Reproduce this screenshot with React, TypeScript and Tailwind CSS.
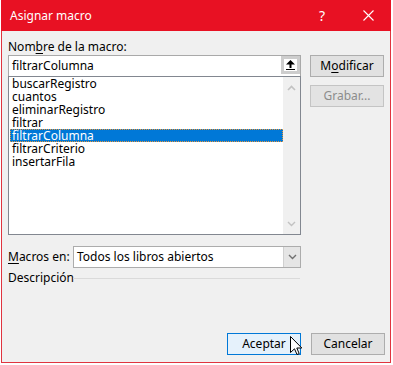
import React from "react";

const items = [
  "buscarRegistro",
  "cuantos",
  "eliminarRegistro",
  "filtrar",
  "filtrarColumna",
  "filtrarCriterio",
  "insertarFila",
];

const ChevronUp = () => (
  <svg width="9" height="6" viewBox="0 0 9 6">
    <path d="M1 5 L4.5 1.5 L8 5" fill="none" stroke="#c2c2c2" strokeWidth="1.6" />
  </svg>
);

const ChevronDown = ({ color = "#c2c2c2" }: { color?: string }) => (
  <svg width="9" height="6" viewBox="0 0 9 6">
    <path d="M1 1 L4.5 4.5 L8 1" fill="none" stroke={color} strokeWidth="1.4" />
  </svg>
);

const Cursor = () => (
  <svg width="13" height="20" viewBox="0 0 13 20" className="absolute left-[290px] top-[336px]">
    <path
      d="M0.5 0.5 L0.5 16.5 L4.5 12.8 L7 18.5 L9.2 17.6 L6.8 12 L11.8 12 Z"
      fill="#fff"
      stroke="#000"
      strokeWidth="1"
      strokeLinejoin="round"
    />
  </svg>
);

export default function App() {
  return (
    <div className="relative w-[393px] h-[365px] bg-white overflow-hidden font-['Segoe_UI','Noto_Sans',sans-serif] text-[12px] text-black">
      <div className="ml-[1px] w-[390px] h-[363px] flex flex-col">
        {/* title bar */}
        <div className="h-[31px] bg-[#e81123] text-white flex items-center">
          <span className="pl-[9px] flex-1 text-[12px]">Asignar macro</span>
          <div className="w-[46px] h-full flex items-center justify-center text-[14px]">?</div>
          <div className="w-[46px] h-full flex items-center justify-center">
            <svg width="11" height="11" viewBox="0 0 11 11">
              <path d="M0.5 0.5 L10.5 10.5 M10.5 0.5 L0.5 10.5" stroke="#fff" strokeWidth="1.1" />
            </svg>
          </div>
        </div>

        {/* body */}
        <div className="flex-1 flex flex-col bg-[#f0f0f0] border-x border-b border-[#e0343f] pl-[6px] pr-[5px] pt-[8px] pb-[7px]">
          <div className="h-[16px] leading-[16px]">
            Nom<span className="underline underline-offset-2">b</span>re de la macro:
          </div>

          <div className="flex gap-[9px]">
            <div className="w-[293px] flex flex-col">
              <div className="h-[21px] border border-[#a9a9a9] border-b-0 bg-white flex items-start">
                <span className="flex-1 pl-[3px] leading-[19px]">filtrarColumna</span>
                <div className="w-[19px] h-[18px] border-[3px] border-[#cdcdcd] bg-white flex items-center justify-center">
                  <svg width="9" height="10" viewBox="0 0 9 10">
                    <path d="M4.5 0 L9 4.5 L5.5 4.5 L5.5 8 L3.5 8 L3.5 4.5 L0 4.5 Z" fill="#000" />
                    <rect x="0" y="9" width="9" height="1" fill="#000" />
                  </svg>
                </div>
              </div>
              <div className="h-[159px] border border-[#828790] bg-white flex">
                <div className="flex-1 flex flex-col pl-[1px]">
                  {items.map((it) => (
                    <div
                      key={it}
                      className={
                        it === "filtrarColumna"
                          ? "h-[13px] leading-[13px] pl-[2px] bg-[#0078d7] text-white outline-1 outline-dotted outline-[#e8963a] -outline-offset-1"
                          : "h-[13px] leading-[13px] pl-[2px]"
                      }
                    >
                      {it}
                    </div>
                  ))}
                </div>
                <div className="w-[17px] bg-[#f0f0f0] flex flex-col items-center justify-between pt-[8px] pb-[7px]">
                  <ChevronUp />
                  <ChevronDown />
                </div>
              </div>
            </div>

            <div className="w-[74px] flex flex-col gap-[8px]">
              <div className="h-[22px] bg-[#e1e1e1] border border-[#adadad] flex items-center justify-center">
                M<span className="underline underline-offset-2">o</span>dificar
              </div>
              <div className="h-[22px] bg-[#e3e3e3] border border-[#c4c4c4] text-[#8c8c8c] flex items-center justify-center">
                Grabar...
              </div>
            </div>
          </div>

          <div className="mt-[11px] flex items-center">
            <div className="w-[65px]">
              <span className="underline underline-offset-2">M</span>acros en:
            </div>
            <div className="w-[228px] h-[22px] border border-[#acacac] bg-white flex">
              <span className="flex-1 pl-[3px] leading-[20px]">Todos los libros abiertos</span>
              <div className="w-[17px] bg-[#e5e5e5] border-l border-[#d0d0d0] flex items-center justify-center">
                <ChevronDown color="#707070" />
              </div>
            </div>
          </div>

          <div className="mt-[2px] h-[16px] flex items-center">
            <div className="w-[65px]">Descripción</div>
            <div className="w-[227px] h-px bg-[#dadada]" />
          </div>

          <div className="mt-auto flex justify-end gap-[10px]">
            <div className="w-[74px] h-[22px] bg-[#e5f1fb] border border-[#0078d7] flex items-center justify-center">
              Aceptar
            </div>
            <div className="w-[74px] h-[22px] bg-[#e1e1e1] border border-[#adadad] flex items-center justify-center">
              Cancelar
            </div>
          </div>
        </div>
      </div>
      <Cursor />
    </div>
  );
}
